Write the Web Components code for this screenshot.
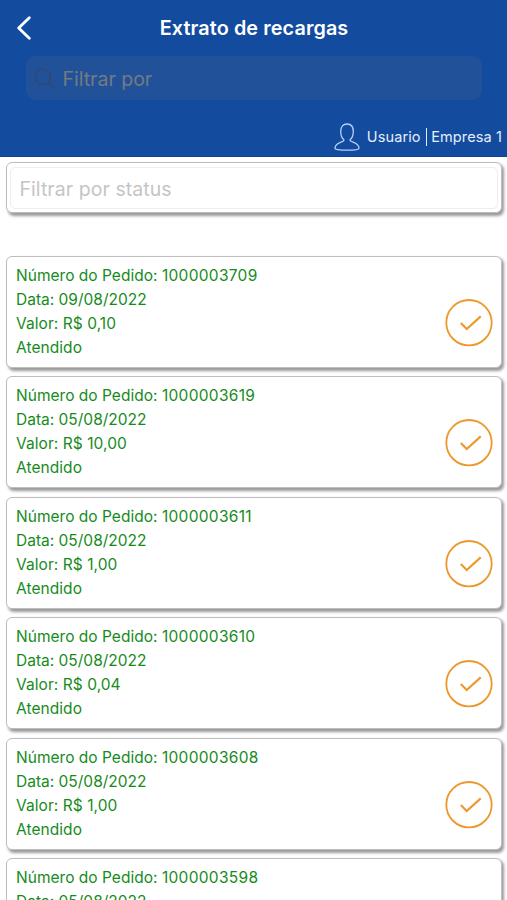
<!DOCTYPE html>
<html lang="pt-BR">
<head>
<meta charset="utf-8">
<meta name="viewport" content="width=device-width">
<title>Extrato de recargas</title>
<style>
html, body { margin: 0; height: 100%; overflow: hidden; background: #fff; font-family: Inter, "Liberation Sans", sans-serif; }
</style>
</head>
<body>
<recharge-page></recharge-page>
<script>
const define = (name, html) => customElements.define(name, class extends HTMLElement {
  constructor() {
    super();
    this.attachShadow({ mode: "open" }).innerHTML = html;
  }
});

define("app-header", `
<style>
:host { display: flex; flex-direction: column; box-sizing: border-box; height: 157px; background: #134b9e; color: #fff; border-bottom: 1px solid #0e4393; }
.bar { display: grid; grid-template-columns: 48px 1fr 48px; align-items: center; height: 56px; }
.bar svg { display: block; margin-left: 16px; }
h1 { margin: 0 0 0 1px; text-align: center; font-size: 19.8px; line-height: 24px; font-weight: 600; letter-spacing: 0.11px; white-space: nowrap; }
</style>
<div class="bar">
  <svg width="16" height="26" viewBox="0 0 16 26" fill="none" stroke="#fff" stroke-width="2.9" stroke-linecap="round" stroke-linejoin="round"><path d="M13.3 2.7 2.7 13l10.6 10.3"/></svg>
  <h1><slot name="title"></slot></h1>
</div>
<slot></slot>`);

define("search-field", `
<style>
:host { display: flex; align-items: center; box-sizing: border-box; height: 44px; margin: 0 25px 0 26px; padding: 1px 0 0 8px; border-radius: 10px; background: #215299; color: #747a82; font-size: 19.5px; }
svg { margin-right: 7.5px; }
</style>
<svg width="21" height="21" viewBox="0 0 21 21" fill="none" stroke="#304878" stroke-width="1.8" stroke-linecap="round"><circle cx="8.7" cy="8.7" r="7.6"/><path d="m14.3 14.3 5.3 5.2"/></svg>
<span><slot></slot></span>`);

define("user-bar", `
<style>
:host { display: flex; align-items: center; justify-content: flex-end; height: 34px; margin-top: 20px; padding-right: 5px; color: #e5eefb; font-size: 14.5px; letter-spacing: 0.12px; white-space: nowrap; }
svg { margin-right: 6.5px; }
i { width: 1.5px; height: 18px; margin: 0 4px 0 5px; background: #e5eefb; }
span { padding-bottom: 1px; }
</style>
<svg width="26" height="28" viewBox="0 0 26 28" fill="none" stroke="#b5d0f6" stroke-width="1.3" stroke-linejoin="round"><path d="M9.8 16.6C7.9 15 6.7 12 6.7 8.200 6.700 3.500 9.200 1 13 1s6.300 2.500 6.300 7.200c0 3.800-1.200 6.800-3.100 8.400v1.200c2.500 1.500 8.800 2.200 8.800 7.400 0 1.300-4 2-12 2S1 26.500 1 25.200c0-5.200 6.300-5.900 8.800-7.400z"/></svg>
<span><slot name="user"></slot></span><i></i><span><slot name="company"></slot></span>`);

define("raised-card", `
<style>
:host { display: block; box-sizing: border-box; border: 1.4px solid #bdbdbd; border-radius: 6px; background: #fff; box-shadow: 2px 2.5px 3px rgba(0,0,0,.4); }
</style>
<slot></slot>`);

define("status-filter", `
<style>
:host { display: block; margin: 5px 5px 0 6px; }
raised-card { height: 51px; padding: 3.5px 3px; }
.input { box-sizing: border-box; height: 42px; border: 1px solid #eee; border-radius: 5px; padding-left: 8.5px; line-height: 42px; font-size: 19.5px; letter-spacing: 0.06px; color: #c5c5c7; }
</style>
<raised-card><div class="input"><slot></slot></div></raised-card>`);

define("recharge-item", `
<style>
:host { display: block; }
raised-card { height: 112px; padding: 7px 8px 7px 9px; }
.row { display: flex; justify-content: space-between; color: #168b1c; font-size: 15.5px; line-height: 24.1px; white-space: nowrap; }
.row div > div { height: 24.1px; }
.id { letter-spacing: 0.02px; }
.id slot { letter-spacing: 0.3px; }
.value, .status { letter-spacing: 0.06px; }
svg { margin-top: 35px; flex: none; }
</style>
<raised-card><div class="row">
  <div>
    <div class="id">Número do Pedido: <slot name="order"></slot></div>
    <div class="date">Data: <slot name="date"></slot></div>
    <div class="value">Valor: R$ <slot name="value"></slot></div>
    <div class="status"><slot name="status"></slot></div>
  </div>
  <svg width="48" height="48" viewBox="0 0 48 48" fill="none" stroke="#ed982c"><circle cx="24" cy="23.7" r="22.7" stroke-width="1.8"/><path d="m15.8 24 5.9 6 14-12.6" stroke-width="2.1"/></svg>
</div></raised-card>`);

define("recharge-page", `
<style>
:host { display: block; height: 900px; overflow: hidden; }
.list { display: flex; flex-direction: column; gap: 8.5px; margin: 42.5px 5px 0 6px; }
</style>
<app-header>
  <span slot="title">Extrato de recargas</span>
  <search-field>Filtrar por</search-field>
  <user-bar><span slot="user">Usuario</span><span slot="company">Empresa 1</span></user-bar>
</app-header>
<status-filter>Filtrar por status</status-filter>
<div class="list">${[
  ["1000003709", "09/08/2022", "0,10"],
  ["1000003619", "05/08/2022", "10,00"],
  ["1000003611", "05/08/2022", "1,00"],
  ["1000003610", "05/08/2022", "0,04"],
  ["1000003608", "05/08/2022", "1,00"],
  ["1000003598", "05/08/2022"]
].map(([order, date, value]) => `<recharge-item><span slot="order">${order}</span><span slot="date">${date}</span><span slot="value">${value || "1,00"}</span><span slot="status">Atendido</span></recharge-item>`).join("")}</div>`);
</script>
</body>
</html>
